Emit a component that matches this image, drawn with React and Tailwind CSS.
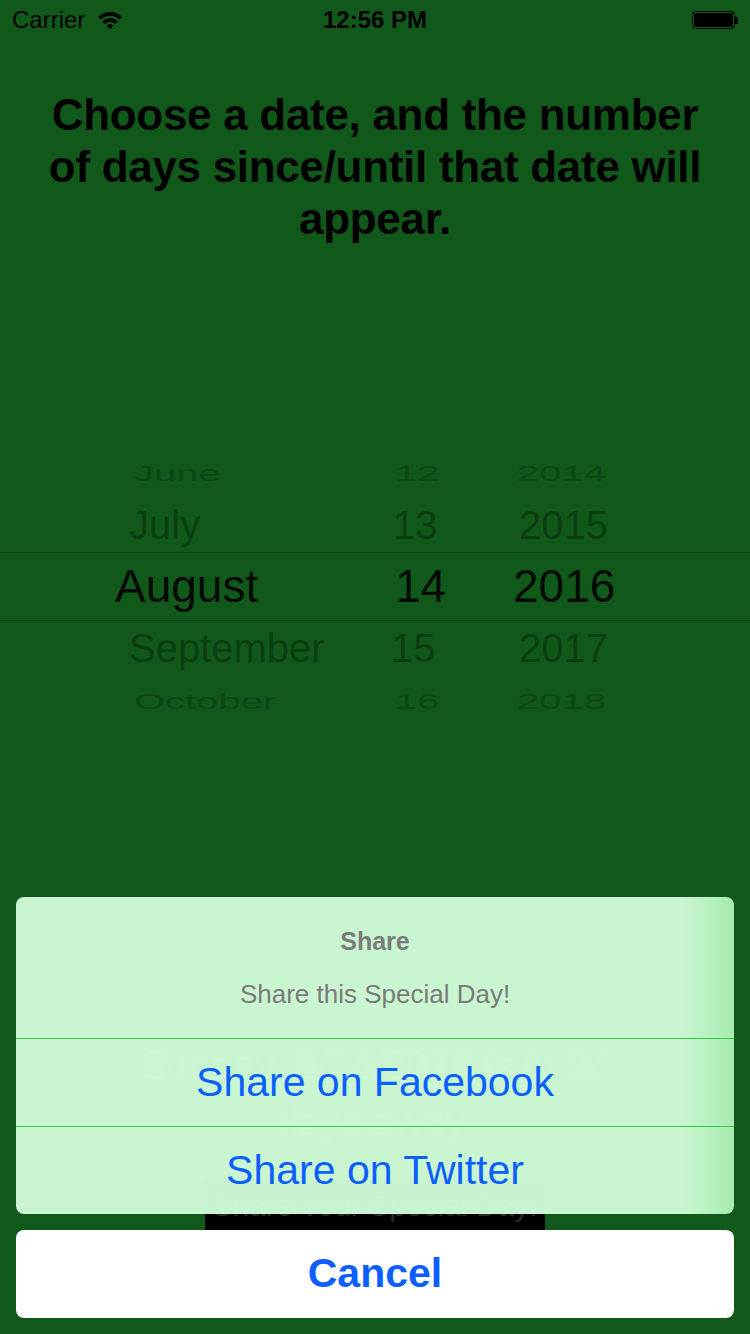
import React from "react";

const font = { fontFamily: '"Liberation Sans", Arial, sans-serif' };

// filas del picker: mes, día, año y posición de cada columna
const rows = [
  { m: "June", d: "12", y: "2014", mx: 134, dx: 395, yx: 517, h: "h-[50px]", size: "text-[40px]", color: "text-[#0d4715]", squish: true },
  { m: "July", d: "13", y: "2015", mx: 129, dx: 393, yx: 519, h: "h-[54px]", size: "text-[40px]", color: "text-[#0b3f12]" },
  { m: "August", d: "14", y: "2016", mx: 115, dx: 395, yx: 513, h: "h-[69px]", size: "text-[46px]", color: "text-[#050a05]", selected: true },
  { m: "September", d: "15", y: "2017", mx: 129, dx: 391, yx: 519, h: "h-[54px]", size: "text-[40px]", color: "text-[#0b3f12]" },
  { m: "October", d: "16", y: "2018", mx: 134, dx: 395, yx: 517, h: "h-[52px]", size: "text-[40px]", color: "text-[#0d4715]", squish: true },
];

function Wifi() {
  return (
    <svg width="26" height="20" viewBox="0 0 26 20">
      <path d="M1 7 A17 17 0 0 1 25 7 L22.5 9.6 A13.4 13.4 0 0 0 3.5 9.6 Z" fill="#000" />
      <path d="M5.3 11.4 A11 11 0 0 1 20.7 11.4 L18.2 14 A7.4 7.4 0 0 0 7.8 14 Z" fill="#000" />
      <path d="M9.6 15.7 A5 5 0 0 1 16.4 15.7 L13 19.2 Z" fill="#000" />
    </svg>
  );
}

function Battery() {
  return (
    <div className="flex items-center">
      <div className="w-[43px] h-[18px] rounded-[3px] border border-black p-[1px]">
        <div className="w-full h-full bg-black rounded-[1px]" />
      </div>
      <div className="w-[3px] h-[7px] bg-black rounded-r-[1px]" />
    </div>
  );
}

export default function App() {
  return (
    <div className="relative w-[750px] h-[1334px] overflow-hidden bg-[#11591a]" style={font}>

      {/* Status bar */}
      <div className="h-[40px] flex items-center justify-between px-[12px] text-black">
        <div className="flex items-center gap-[12px]">
          <span className="text-[24px]">Carrier</span>
          <Wifi />
        </div>
        <span className="absolute left-0 right-0 text-center text-[24px] font-bold pointer-events-none">12:56 PM</span>
        <Battery />
      </div>

      {/* Titulo */}
      <h1 className="mt-[49px] px-[20px] text-center text-[44px] leading-[52px] font-bold text-black tracking-[-0.3px]">
        Choose a date, and the number<br />of days since/until that date will<br />appear.
      </h1>

      {/* Picker */}
      <div className="mt-[203px]">
        {rows.map((r) => (
          <div
            key={r.m}
            className={`relative ${r.h} ${r.size} ${r.color} ${r.selected ? "border-y border-[#0b4311]" : ""}`}
          >
            <div className={`absolute inset-0 flex items-center ${r.squish ? "scale-y-[0.55]" : ""}`}>
              <span className="absolute" style={{ left: r.mx }}>{r.m}</span>
              <span className="absolute" style={{ left: r.dx }}>{r.d}</span>
              <span className="absolute" style={{ left: r.yx }}>{r.y}</span>
            </div>
          </div>
        ))}
      </div>

      {/* Resultado (queda detras del action sheet) */}
      <div className="mt-[310px] text-center text-[#3f8047] text-[40px] leading-[56px]">
        <p>Sunday, 8/14/2016 is in 34</p>
        <p>days away.</p>
      </div>
      <div className="mt-[31px] flex justify-center">
        <div className="w-[340px] h-[50px] bg-black flex items-center justify-center text-[30px] text-[#2b2b2b]">
          Share Your Special Day!
        </div>
      </div>

      {/* Action sheet */}
      <div className="absolute left-[16px] right-[16px] bottom-[16px] flex flex-col gap-[16px]">
        <div className="rounded-[8px] overflow-hidden bg-[linear-gradient(to_right,rgba(207,251,214,0.97)_0%,rgba(207,251,214,0.97)_93%,rgba(168,239,178,0.98)_100%)]">
          <div className="h-[141px] flex flex-col items-center text-[#7b7b7b]">
            <p className="mt-[26px] text-[25px] font-bold">Share</p>
            <p className="mt-[14px] text-[26px]">Share this Special Day!</p>
          </div>
          <div className="h-px bg-[#38c948]" />
          <button className="w-full h-[87px] flex items-center justify-center text-[41px] text-[#0b5fff]">
            Share on Facebook
          </button>
          <div className="h-px bg-[#38c948]" />
          <button className="w-full h-[87px] flex items-center justify-center text-[41px] text-[#0b5fff]">
            Share on Twitter
          </button>
        </div>
        <button className="h-[88px] rounded-[8px] bg-white flex items-center justify-center text-[41px] font-bold text-[#0b5fff]">
          Cancel
        </button>
      </div>

    </div>
  );
}
